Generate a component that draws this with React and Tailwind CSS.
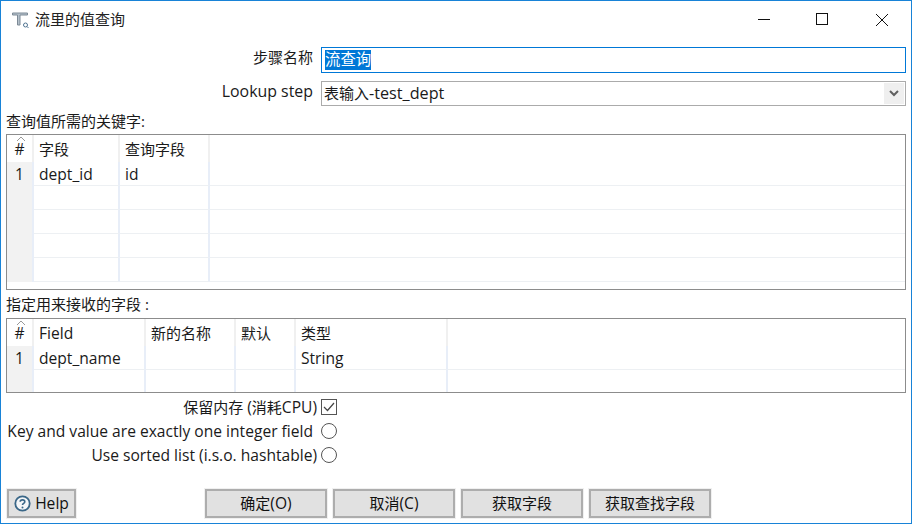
import React from "react";

const FONT = "[font-family:'Open_Sans','Noto_Sans_CJK_SC',sans-serif]";

// latin text runs a little larger than the CJK text in this dialog
const L = ({ children }) => <span className="text-[15.6px]">{children}</span>;

const Grid = ({ columns, rows, height, className = "" }) => (
  <div className={`mx-[5px] border border-[#8c8c8c] ${height} overflow-hidden ${className}`}>
    {rows.map((row, r) => (
      <div key={r} className={`flex ${r === 0 ? "h-[27px]" : "h-[24px]"}`}>
        {/* row number cell */}
        <div className={`relative flex w-[27px] shrink-0 items-center justify-center border-r-2 ${r === 0 ? "border-[#f0f0f0] bg-white" : "border-[#e8eef8] bg-[#f2f2f2]"}`}>
          {r === 0 && (
            <svg className="absolute left-[9px] top-[1px]" width="10" height="6" viewBox="0 0 10 6" fill="none">
              <path d="M1 5 L5 1 L9 5" stroke="#9a9a9a" strokeWidth="1" />
            </svg>
          )}
          <span className={r === 0 ? "mt-[1px]" : ""}><L>{r === 0 ? "#" : r <= row.count ? r : ""}</L></span>
        </div>
        {columns.map((w, c) => (
          <div
            key={c}
            className={`flex shrink-0 items-center border-r-2 pl-[5px] ${r === 0 ? "border-[#f0f0f0]" : "border-[#e8eef8] border-b border-b-[#edf0f3]"}`}
            style={{ width: w }}
          >
            <span className="whitespace-nowrap">{row.cells[c]}</span>
          </div>
        ))}
        <div className={`flex-1 ${r === 0 ? "" : "border-b border-[#edf0f3]"}`} />
      </div>
    ))}
  </div>
);

const Btn = ({ children, className = "" }) => (
  <button className={`h-[29px] border-2 border-[#adadad] bg-[#e1e1e1] text-[15px] leading-none text-[#111] outline outline-1 outline-[#f0f0f0] ${className}`}>
    {children}
  </button>
);

const OptionRow = ({ label, gap = "ml-[4px]", children }) => (
  <div className="flex h-[24px] items-center justify-end pr-[574px]">
    <span className="whitespace-nowrap">{label}</span>
    <span className={`${gap} flex h-[16px] w-[16px] shrink-0 items-center justify-center`}>{children}</span>
  </div>
);

const Radio = () => <span className="block h-[16px] w-[16px] rounded-full border border-[#555]" />;

export default function App() {
  const keyRows = [
    { cells: ["字段", "查询字段"] },
    { count: 1, cells: [<L>dept_id</L>, <L>id</L>] },
    { cells: [] },
    { cells: [] },
    { cells: [] },
    { cells: [] },
  ];
  const valueRows = [
    { cells: [<L>Field</L>, "新的名称", "默认", "类型"] },
    { count: 1, cells: [<L>dept_name</L>, "", "", <L>String</L>] },
    { cells: [] },
  ];

  return (
    <div className={`${FONT} flex h-[524px] w-[912px] flex-col overflow-hidden border border-[#1883d7] bg-white text-[15px] leading-[20px] text-[#1a1a1a]`}>
      {/* title bar */}
      <div className="flex h-[37px] shrink-0 items-center">
        <svg className="ml-[10px]" width="20" height="20" viewBox="0 0 20 20" fill="none">
          <path d="M1.5 3 H16.5 V5 H9 V15 H6.5 V5 H1.5 Z" fill="#b4c0ca" stroke="#7d8a96" strokeWidth="1" />
          <circle cx="14.5" cy="15" r="2" stroke="#4f7391" strokeWidth="1" />
          <path d="M16 16.5 L17.5 18" stroke="#4f7391" strokeWidth="1" />
        </svg>
        <span className="ml-[4px] mb-[2px] text-[#222]">流里的值查询</span>
        <div className="ml-auto flex items-center">
          <svg className="mr-[45px]" width="13" height="13" viewBox="0 0 13 13"><path d="M0 6.5 H12" stroke="#111" strokeWidth="1" /></svg>
          <svg className="mr-[46px]" width="13" height="13" viewBox="0 0 13 13" fill="none"><rect x="0.5" y="0.5" width="11" height="11" stroke="#111" /></svg>
          <svg className="mr-[22px]" width="14" height="14" viewBox="0 0 14 14"><path d="M1 1 L13 13 M13 1 L1 13" stroke="#111" strokeWidth="1" /></svg>
        </div>
      </div>

      {/* step name */}
      <div className="mt-[9px] flex h-[25px] items-center">
        <span className="w-[312px] pb-[5px] text-right">步骤名称</span>
        <div className="ml-[8px] flex h-[26px] w-[585px] items-center border border-[#0078d7] pl-[3px]">
          <span className="bg-[#0078d7] text-[15.4px] text-white">流查询</span>
        </div>
      </div>

      {/* lookup step */}
      <div className="mt-[9px] flex h-[25px] items-center">
        <span className="w-[312px] pb-[5px] text-right"><span className="text-[15.9px]">Lookup step</span></span>
        <div className="ml-[8px] flex h-[25px] w-[585px] items-center border border-[#ababab] pb-[2px] pl-[2px]">
          <span>表输入<span className="text-[16.2px]">-test_dept</span></span>
          <span className="ml-auto mr-[1px] mt-[2px] flex h-[21px] w-[20px] items-center justify-center bg-[#efefef]">
            <svg width="10" height="7" viewBox="0 0 10 7" fill="none"><path d="M1 1 L5 5 L9 1" stroke="#606060" strokeWidth="2" /></svg>
          </span>
        </div>
      </div>

      <div className="ml-[5px] mt-[5px] h-[23px] leading-[20px]">查询值所需的关键字:</div>
      <Grid columns={[86, 90]} rows={keyRows} height="h-[156px]" />

      <div className="ml-[5px] mt-[4px] h-[24px] leading-[20px]">指定用来接收的字段 :</div>
      <Grid columns={[112, 90, 60, 152]} rows={valueRows} height="h-[75px]" />

      {/* options */}
      <div className="mt-[2px]">
        <OptionRow label={<>保留内存 <L>(</L>消耗<L>CPU)</L></>}>
          <span className="flex h-[16px] w-[16px] items-center justify-center border border-[#555]">
            <svg width="12" height="10" viewBox="0 0 12 10" fill="none"><path d="M1 5 L4.5 8.5 L11 1" stroke="#444" strokeWidth="1.2" /></svg>
          </span>
        </OptionRow>
        <OptionRow gap="ml-[8px]" label={<L>Key and value are exactly one integer field</L>}><Radio /></OptionRow>
        <OptionRow label={<L>Use sorted list (i.s.o. hashtable)</L>}><Radio /></OptionRow>
      </div>

      {/* bottom buttons */}
      <div className="mt-auto mb-[5px] flex items-center pl-[6px]">
        <Btn className="flex w-[69px] items-center justify-center gap-[4px]">
          <svg width="17" height="17" viewBox="0 0 17 17" fill="none">
            <circle cx="8.5" cy="8.5" r="7.2" fill="#f4f6f8" stroke="#3a6788" strokeWidth="1.8" />
            <path d="M6.2 6.8 C6.2 4.2 10.8 4.2 10.8 6.8 C10.8 8.4 8.5 8.4 8.5 10" stroke="#3a6788" strokeWidth="1.6" />
            <circle cx="8.5" cy="12.4" r="1" fill="#3a6788" />
          </svg>
          <L>Help</L>
        </Btn>
        <Btn className="ml-[129px] w-[122px]">确定<L>(O)</L></Btn>
        <Btn className="ml-[6px] w-[122px]">取消<L>(C)</L></Btn>
        <Btn className="ml-[6px] w-[122px]">获取字段</Btn>
        <Btn className="ml-[6px] w-[122px]">获取查找字段</Btn>
      </div>
    </div>
  );
}
